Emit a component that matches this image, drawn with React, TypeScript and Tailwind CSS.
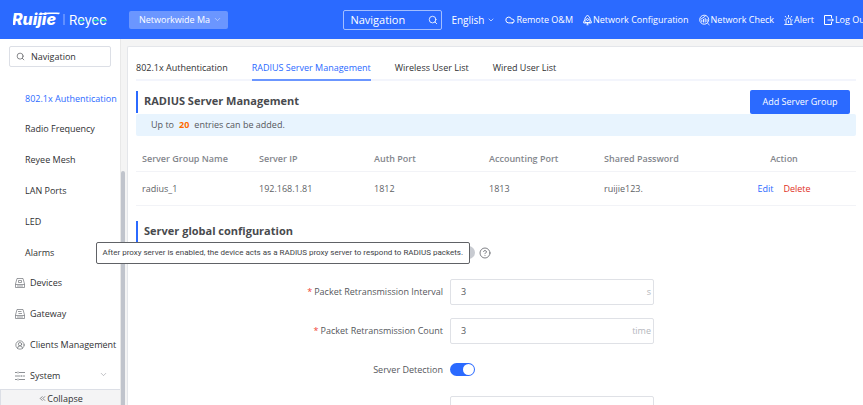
import { useState } from 'react';
import type { ReactNode } from 'react';
import { ChevronDown, ChevronsLeft, CircleHelp, CircleUserRound, Cloud, Search } from 'lucide-react';

interface Server {
  name: string;
  ip: string;
  authPort: number;
  accountingPort: number;
  password: string;
}

const servers: Server[] = [
  { name: 'radius_1', ip: '192.168.1.81', authPort: 1812, accountingPort: 1813, password: 'ruijie123.' },
];

const subItems = ['802.1x Authentication', 'Radio Frequency', 'Reyee Mesh', 'LAN Ports', 'LED', 'Alarms'];
const tabs = ['802.1x Authentication', 'RADIUS Server Management', 'Wireless User List', 'Wired User List'];

function Logo() {
  return (
    <svg className="h-5 w-24 shrink-0" viewBox="0 0 96 20" role="img" aria-label="Ruijie Reyee">
      <g fill="#fff">
        <text x="-1" y="15" fontFamily="Inter" fontSize="16" fontWeight="800" fontStyle="italic">
          Ruijie
        </text>
        <path d="M25 4.200c7-1.600 14-1.800 22-1.400l-1 1.400c-7-.4-13-.3-19 .6z" />
        <path d="M50.500 4h1v11h-1z" opacity=".5" />
        <text x="56" y="15" fontFamily="Inter" fontSize="13">
          Reyee
        </text>
      </g>
      <path d="M66.500 10.500h4M80.500 10.500h5M88.500 10.500h5" stroke="#1fe0b0" strokeWidth="1.500" />
    </svg>
  );
}

function RocketIcon() {
  return (
    <svg className="h-3 w-[9px]" viewBox="0 0 9 12" fill="none" stroke="currentColor" strokeWidth="0.900">
      <path d="M4.500 1 7 4v4.500H2V4zM2 5.500.7 7.500V9H8.300V7.500L7 5.500M3.500 10.800h2M4.500 8.500v2" />
      <circle cx="4.500" cy="5.500" r="1" />
    </svg>
  );
}

function NetworkCheckIcon() {
  return (
    <svg className="h-3 w-[11px]" viewBox="0 0 11 12" fill="none" stroke="currentColor" strokeWidth="0.900">
      <circle cx="5.200" cy="5.700" r="4.500" />
      <path d="M2.800 8V6M4.500 8.500V5M6.200 8.500V4M1.500 5.500 6.500 2M8 5v3M8.300 9l2.200 2" />
    </svg>
  );
}

function AlertIcon() {
  return (
    <svg className="h-3 w-[9px]" viewBox="0 0 9 12" fill="none" stroke="currentColor" strokeWidth="0.900">
      <path d="M2 10V6.500a2.500 2.500 0 0 1 5 0V10M.3 10.500h8.400M4.500 1v2M1 2l1.200 1.500M8 2 6.800 3.500M4.500 6.500v2.500M.2 6h1M7.800 6h1" />
    </svg>
  );
}

function LogOutIcon() {
  return (
    <svg className="h-3 w-[10px]" viewBox="0 0 10 12" fill="none" stroke="currentColor">
      <path d="M7.500 4V1.500h-7v9h7V8M3.500 6h6M7.500 4.300 9.300 6 7.500 7.700" />
    </svg>
  );
}

function DeviceIcon({ detail }: { detail: string }) {
  return (
    <svg className="size-[10px]" viewBox="0 0 10 10" fill="none" stroke="currentColor" strokeWidth="0.700">
      <path d="M2 .5h6L9.500 6v3.500h-9V6zM.5 6.500h9M2 8h6" />
      <path d={detail} />
    </svg>
  );
}

function SystemIcon() {
  return (
    <svg className="size-[10px]" viewBox="0 0 10 10" fill="none" stroke="currentColor" strokeWidth="0.800">
      <path d="M0 1.500h2M4 1.500h6M0 5h5M7.500 5H10M0 8.500h2M4 8.500h6M3 .5v2M6.200 4v2M3 7.500v2" />
    </svg>
  );
}

const menu: { label: string; icon: ReactNode; expandable?: boolean }[] = [
  { label: 'Devices', icon: <DeviceIcon detail="M3.500 2.500h3v2h-3z" /> },
  { label: 'Gateway', icon: <DeviceIcon detail="M3 2.500h3.500M3.500 4.500H7" /> },
  { label: 'Clients Management', icon: <CircleUserRound className="size-[10px]" strokeWidth={1.8} />, expandable: true },
  { label: 'System', icon: <SystemIcon />, expandable: true },
];

const headerLinks: { label: string; icon: ReactNode }[] = [
  { label: 'Remote O&M', icon: <Cloud className="size-[10px]" strokeWidth={2.4} /> },
  { label: 'Network Configuration', icon: <RocketIcon /> },
  { label: 'Network Check', icon: <NetworkCheckIcon /> },
  { label: 'Alert', icon: <AlertIcon /> },
  { label: 'Log Out', icon: <LogOutIcon /> },
];

function Header() {
  return (
    <header className="flex h-[39px] shrink-0 items-center overflow-hidden bg-[#2b6aff] pl-[13px] text-white">
      <Logo />
      <div className="relative ml-5 flex shrink-0 items-center">
        <select
          aria-label="Network"
          className="h-[18px] w-[99px] appearance-none rounded-xs bg-[#6b96ff] pl-[10px] text-[9px] leading-4 text-white"
        >
          <option>Networkwide Ma</option>
        </select>
        <ChevronDown className="pointer-events-none absolute right-[6px] size-[9px] opacity-80" strokeWidth={1.5} />
      </div>
      <div className="ml-auto flex shrink-0 items-center">
        <div className="relative flex items-center">
          <input
            aria-label="Search navigation"
            defaultValue="Navigation"
            className="h-5 w-[99px] rounded-xs border border-[#a3beff] bg-transparent pl-[6px] text-[11px] leading-4 text-white"
          />
          <Search className="absolute right-1 size-[10px]" strokeWidth={2} />
        </div>
        <div className="relative ml-[9px] flex items-center">
          <select aria-label="Language" className="h-[18px] w-11 appearance-none bg-transparent text-[10px] leading-4 text-white">
            <option>English</option>
          </select>
          <ChevronDown className="pointer-events-none absolute right-0 size-2" strokeWidth={2} />
        </div>
      </div>
      <nav className="-mr-[5px] ml-[10px] flex shrink-0 gap-[10px] text-[9px]">
        {headerLinks.map((link) => (
          <a key={link.label} href="#" className="flex items-center gap-px whitespace-nowrap">
            {link.icon}
            {link.label}
          </a>
        ))}
      </nav>
    </header>
  );
}

function Sidebar() {
  return (
    <aside className="flex w-[120px] shrink-0 flex-col bg-white text-[9px] text-[#303133]">
      <div className="relative mx-[9px] mt-[7px] flex shrink-0 items-center">
        <Search className="absolute left-[7px] size-[9px] text-[#606266]" strokeWidth={2} />
        <input
          aria-label="Search menu"
          defaultValue="Navigation"
          className="h-[21px] w-full rounded-xs border border-[#dcdfe6] pl-[21px]"
        />
      </div>
      <nav className="mt-4 -mb-[2px] flex min-h-0 flex-1 flex-col">
        {subItems.map((item, i) => (
          <a
            key={item}
            href="#"
            className={`flex flex-1 items-center pl-[25px] whitespace-nowrap ${i === 0 ? 'text-[#2b6aff]' : ''}`}
          >
            {item}
          </a>
        ))}
        {menu.map((item) => (
          <a key={item.label} href="#" className="relative flex flex-1 items-center gap-[5px] pl-[15px] whitespace-nowrap">
            <span className="text-[#707378]">{item.icon}</span>
            {item.label}
            {item.expandable && (
              <ChevronDown className="absolute top-[10px] right-3 size-[9px] text-[#909399]" strokeWidth={1.5} />
            )}
          </a>
        ))}
      </nav>
      <button className="relative flex h-4 shrink-0 items-center justify-center border-t border-l border-[#dcdfe6] bg-[#f4f4f5] pt-[2px]">
        <ChevronsLeft className="size-[9px]" strokeWidth={1.5} />
        Collapse
      </button>
    </aside>
  );
}

function SectionTitle({ children }: { children: ReactNode }) {
  return (
    <h2 className="flex h-[22px] items-center border-l-2 border-[#2b6aff] pl-[6px] text-[11px] font-bold text-[#484a4e]">
      {children}
    </h2>
  );
}

interface SwitchProps {
  id: string;
  label?: string;
  checked: boolean;
  onChange: (v: boolean) => void;
}

function Switch({ id, label, checked, onChange }: SwitchProps) {
  return (
    <input
      id={id}
      type="checkbox"
      role="switch"
      aria-label={label}
      checked={checked}
      onChange={(e) => onChange(e.target.checked)}
      className="h-[13px] w-[25px] shrink-0 appearance-none rounded-full bg-[#c8cbd1] p-px before:block before:size-[11px] before:rounded-full before:bg-white checked:bg-[#2b6aff] checked:before:ml-3"
    />
  );
}

function FormRow({ id, label, required, children }: { id: string; label?: string; required?: boolean; children: ReactNode }) {
  return (
    <div className="flex h-[26px] items-center gap-[7px]">
      <label htmlFor={id} className="w-[307px] shrink-0 text-right">
        {required && <span className="mr-[2px] text-[#f04134]">*</span>}
        {label}
      </label>
      {children}
    </div>
  );
}

function UnitInput({ id, value, unit }: { id: string; value: string; unit: string }) {
  return (
    <div className="relative w-[204px]">
      <input id={id} defaultValue={value} className="h-[26px] w-full rounded-xs border border-[#dfe1e6] pl-[10px]" />
      <span className="absolute top-[6px] right-[3px] text-[#b4b7bd]">{unit}</span>
    </div>
  );
}

function ServerTable() {
  return (
    <table className="w-full table-fixed text-left text-[9px] text-[#606266]">
      <colgroup>
        <col className="w-[117px]" />
        <col className="w-[115px]" />
        <col className="w-[115px]" />
        <col className="w-[115px]" />
        <col className="w-[114px]" />
        <col />
      </colgroup>
      <thead>
        <tr className="h-[35px] border-b border-[#f2f3f7] text-[#83868c]">
          <th className="pt-[10px] pl-[6px] font-semibold">Server Group Name</th>
          <th className="pt-[10px] pl-[6px] font-semibold">Server IP</th>
          <th className="pt-[10px] pl-[6px] font-semibold">Auth Port</th>
          <th className="pt-[10px] pl-[6px] font-semibold">Accounting Port</th>
          <th className="pt-[10px] pl-[6px] font-semibold">Shared Password</th>
          <th className="pt-[10px] text-center font-semibold">Action</th>
        </tr>
      </thead>
      <tbody>
        {servers.map((s) => (
          <tr key={s.name} className="h-[34px] border-b border-[#f2f3f7]">
            <td className="pt-px pl-[6px]">{s.name}</td>
            <td className="pt-px pl-[6px]">{s.ip}</td>
            <td className="pt-px pl-[6px]">{s.authPort}</td>
            <td className="pt-px pl-[6px]">{s.accountingPort}</td>
            <td className="pt-px pl-[6px]">{s.password}</td>
            <td className="pt-px text-center">
              <button className="text-[#2b6aff]">Edit</button>
              <button className="ml-[10px] text-[#e0301e]">Delete</button>
            </td>
          </tr>
        ))}
      </tbody>
    </table>
  );
}

export default function App() {
  const [proxy, setProxy] = useState(false);
  const [detection, setDetection] = useState(true);

  return (
    <div className="flex h-screen flex-col overflow-hidden bg-[#f4f4f4] font-['Open_Sans',sans-serif] leading-normal">
      <Header />
      <div className="flex min-h-0 flex-1">
        <Sidebar />
        {/* Sidebar scrollbar */}
        <div className="flex w-[7px] shrink-0 items-end border-l border-[#e8e8e8]">
          <div className="h-[64%] w-1 rounded-t-xs bg-[#c0c4cc]" />
        </div>
        <main className="mt-[7px] min-w-0 flex-1 rounded-tl-xs border-t border-l border-[#e4e6ea] bg-white pr-[7px] pl-2 text-[9px] text-[#55575c]">
          <div role="tablist" className="flex h-[34px] items-end gap-6 border-b-2 border-[#f3f5fc] text-[#303133]">
            {tabs.map((tab, i) => (
              <button
                key={tab}
                role="tab"
                aria-selected={i === 1}
                className={`-mb-[2px] h-6 border-b-2 ${
                  i === 1 ? 'border-[#6b96ff] text-[#2b6aff]' : 'border-transparent'
                }`}
              >
                {tab}
              </button>
            ))}
          </div>

          <div className="mt-2 flex h-[25px] items-center justify-between pr-[6px]">
            <SectionTitle>RADIUS Server Management</SectionTitle>
            <button className="h-6 w-[100px] rounded-xs bg-[#2b6aff] text-white">Add Server Group</button>
          </div>
          <p className="flex h-[22px] items-center rounded-xs bg-[#e8f4fe] pl-[15px]">
            Up to <b className="mx-[5px] text-[#ff6a00]">20</b> entries can be added.
          </p>
          <ServerTable />

          <div className="mt-[15px]">
            <SectionTitle>Server global configuration</SectionTitle>
          </div>
          <form className="-mt-[3px] flex flex-col gap-[13px]">
            <FormRow id="proxy">
              <Switch id="proxy" label="Proxy Server" checked={proxy} onChange={setProxy} />
              <div className="relative -ml-[3px]">
                <CircleHelp className="size-3 text-[#707378]" strokeWidth={1.8} />
                <div
                  role="tooltip"
                  className="absolute -top-[5px] right-full z-10 mr-[9px] flex h-[22px] items-center rounded-xs border border-[#606266] bg-white px-[6px] font-[Roboto,sans-serif] text-[8px] whitespace-nowrap text-[#404246]"
                >
                  After proxy server is enabled, the device acts as a RADIUS proxy server to respond to RADIUS packets.
                </div>
              </div>
            </FormRow>
            <FormRow id="interval" label="Packet Retransmission Interval" required>
              <UnitInput id="interval" value="3" unit="s" />
            </FormRow>
            <FormRow id="count" label="Packet Retransmission Count" required>
              <UnitInput id="count" value="3" unit="time" />
            </FormRow>
            <FormRow id="detection" label="Server Detection">
              <Switch id="detection" checked={detection} onChange={setDetection} />
            </FormRow>
            <FormRow id="detection-interval" label="Detection Interval" required>
              <UnitInput id="detection-interval" value="" unit="s" />
            </FormRow>
          </form>
        </main>
      </div>
    </div>
  );
}
